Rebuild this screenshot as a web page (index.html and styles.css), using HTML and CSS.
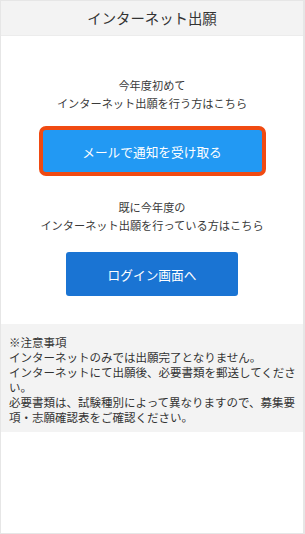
FILE: index.html
```html
<!DOCTYPE html>
<html lang="ja">
<head>
    <meta charset="UTF-8">
    <meta name="viewport" content="width=device-width, initial-scale=1.0">
    <title>インターネット出願</title>
    <link rel="stylesheet" href="styles.css">
</head>
<body>

    <div class="frame">
        <div class="header">インターネット出願</div>

        <div class="section first">
            <p class="lead">今年度初めて<br>インターネット出願を行う方はこちら</p>
            <button class="btn btn-notify" type="button">メールで通知を受け取る</button>
        </div>

        <div class="section second">
            <p class="lead">既に今年度の<br>インターネット出願を行っている方はこちら</p>
            <button class="btn btn-login" type="button">ログイン画面へ</button>
        </div>

        <div class="notes">
            ※注意事項<br>
            インターネットのみでは出願完了となりません。<br>
            インターネットにて出願後、必要書類を郵送してください。<br>
            必要書類は、試験種別によって異なりますので、募集要項・志願確認表をご確認ください。
        </div>
    </div>

</body>
</html>
```

FILE: styles.css
```css
body {
    margin: 0;
    background: #fff;
    font-family: "Noto Sans CJK JP", "Noto Sans", sans-serif;
    color: #333;
}

.frame {
    width: 305px;
    height: 534px;
    box-sizing: border-box;
    border: 1px solid #e6e6e6;
    border-right-width: 2px;
    background: #fff;
}

.header {
    height: 34px;
    line-height: 34px;
    background: #f3f3f3;
    border-bottom: 1px solid #ececec;
    text-align: center;
    font-size: 14.4px;
    color: #333;
}

.section {
    display: flex;
    flex-direction: column;
    align-items: center;
}

.first {
    margin-top: 40px;
}

.second {
    margin-top: 22px;
}

.lead {
    margin: 0;
    font-size: 11.2px;
    line-height: 18px;
    text-align: center;
    color: #3a3a3a;
}

.btn {
    font-family: inherit;
    color: #fff;
    cursor: pointer;
    font-size: 12.7px;
    padding: 0;
}

.btn-notify {
    margin-top: 14px;
    width: 227px;
    height: 50px;
    background: #2299f3;
    border: 4px solid #f04a12;
    border-radius: 7px;
}

.btn-login {
    margin-top: 18px;
    width: 172px;
    height: 44px;
    background: #1a74d3;
    border: none;
    border-radius: 3px;
}

.notes {
    margin-top: 28px;
    background: #f3f3f3;
    padding: 11px 5px 7px 8px;
    font-size: 11.5px;
    line-height: 15px;
    color: #333;
}
```
